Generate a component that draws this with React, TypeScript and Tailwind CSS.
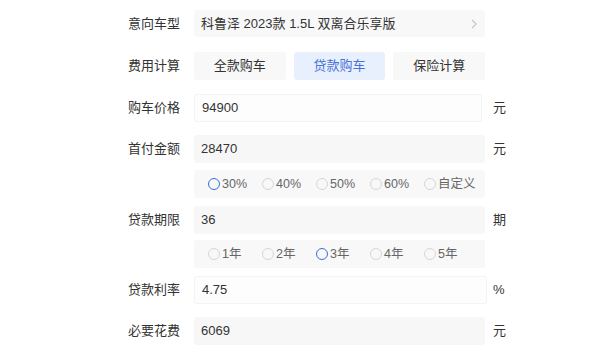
import React from "react";

const font = { fontFamily: '"Liberation Sans", "Noto Sans CJK SC", sans-serif' };

type RowProps = {
  label: string;
  unit?: string;
  className?: string;
  children: React.ReactNode;
};

const Row = ({ label, unit, className = "", children }: RowProps) => (
  <div className={`flex h-[28px] items-center ${className}`}>
    <div className="w-[66px] text-[13px] text-[#333]">{label}</div>
    <div className="w-[291px] h-full">{children}</div>
    {unit && <div className="ml-[8px] text-[13px] text-[#333]">{unit}</div>}
  </div>
);

const Radio = ({ label, active = false }: { label: string; active?: boolean }) => (
  <div className="flex w-[54px] items-center gap-[2px]">
    <span
      className={`inline-block h-[12px] w-[12px] rounded-full border ${
        active ? "border-[#3b6fd6] border-[1.5px]" : "border-[#d6d6d6]"
      }`}
    />
    <span className="text-[12.5px] text-[#666]">{label}</span>
  </div>
);

export default function App() {
  const down = ["30%", "40%", "50%", "60%", "自定义"];
  const years = ["1年", "2年", "3年", "4年", "5年"];

  return (
    <div className="w-[600px] h-[350px] bg-white overflow-hidden pl-[128px] pt-[10px]" style={font}>
      <Row label="意向车型">
        <div className="flex h-[27px] items-center justify-between rounded-[3px] bg-[#f8f8f9] pl-[7px] pr-[8px] text-[13px] text-[#333]">
          <span>科鲁泽 2023款 1.5L 双离合乐享版</span>
          <svg width="6" height="10" viewBox="0 0 6 10" fill="none">
            <path d="M1 1l4 4-4 4" stroke="#c8c8c8" strokeWidth="1.3" />
          </svg>
        </div>
      </Row>

      <Row label="费用计算" className="mt-[14px]">
        <div className="flex h-full gap-[8px] text-[13px]">
          <div className="flex flex-1 items-center justify-center rounded-[3px] bg-[#f8f8f9] text-[#333]">全款购车</div>
          <div className="flex flex-1 items-center justify-center rounded-[3px] bg-[#e8f0fd] text-[#4a73d9]">贷款购车</div>
          <div className="flex flex-1 items-center justify-center rounded-[3px] bg-[#f8f8f9] text-[#333]">保险计算</div>
        </div>
      </Row>

      <Row label="购车价格" unit="元" className="mt-[14px]">
        <div className="flex h-full w-[288px] items-center rounded-[3px] border border-[#f3f3f3] bg-[#fdfdfd] pl-[7px] text-[13px] text-[#333]">94900</div>
      </Row>

      <Row label="首付金额" unit="元" className="mt-[13px]">
        <div className="flex h-full items-center rounded-[3px] bg-[#f7f7f8] pl-[7px] text-[13px] text-[#333]">28470</div>
      </Row>

      <Row label="" className="mt-[7px]">
        <div className="flex h-full items-center rounded-[3px] bg-[#f8f8f9] pl-[14px]">
          {down.map((d, i) => (
            <Radio key={d} label={d} active={i === 0} />
          ))}
        </div>
      </Row>

      <Row label="贷款期限" unit="期" className="mt-[8px]">
        <div className="flex h-full items-center rounded-[3px] bg-[#f7f7f8] pl-[7px] text-[13px] text-[#333]">36</div>
      </Row>

      <Row label="" className="mt-[6px]">
        <div className="flex h-full items-center rounded-[3px] bg-[#f8f8f9] pl-[14px]">
          {years.map((y, i) => (
            <Radio key={y} label={y} active={i === 2} />
          ))}
        </div>
      </Row>

      <Row label="贷款利率" unit="%" className="mt-[8px]">
        <div className="flex h-full w-[293px] items-center rounded-[3px] border border-[#f3f3f3] bg-[#fdfdfd] pl-[7px] text-[13px] text-[#333]">4.75</div>
      </Row>

      <Row label="必要花费" unit="元" className="mt-[13px]">
        <div className="flex h-full items-center rounded-[3px] bg-[#f7f7f8] pl-[7px] text-[13px] text-[#333]">6069</div>
      </Row>
    </div>
  );
}
